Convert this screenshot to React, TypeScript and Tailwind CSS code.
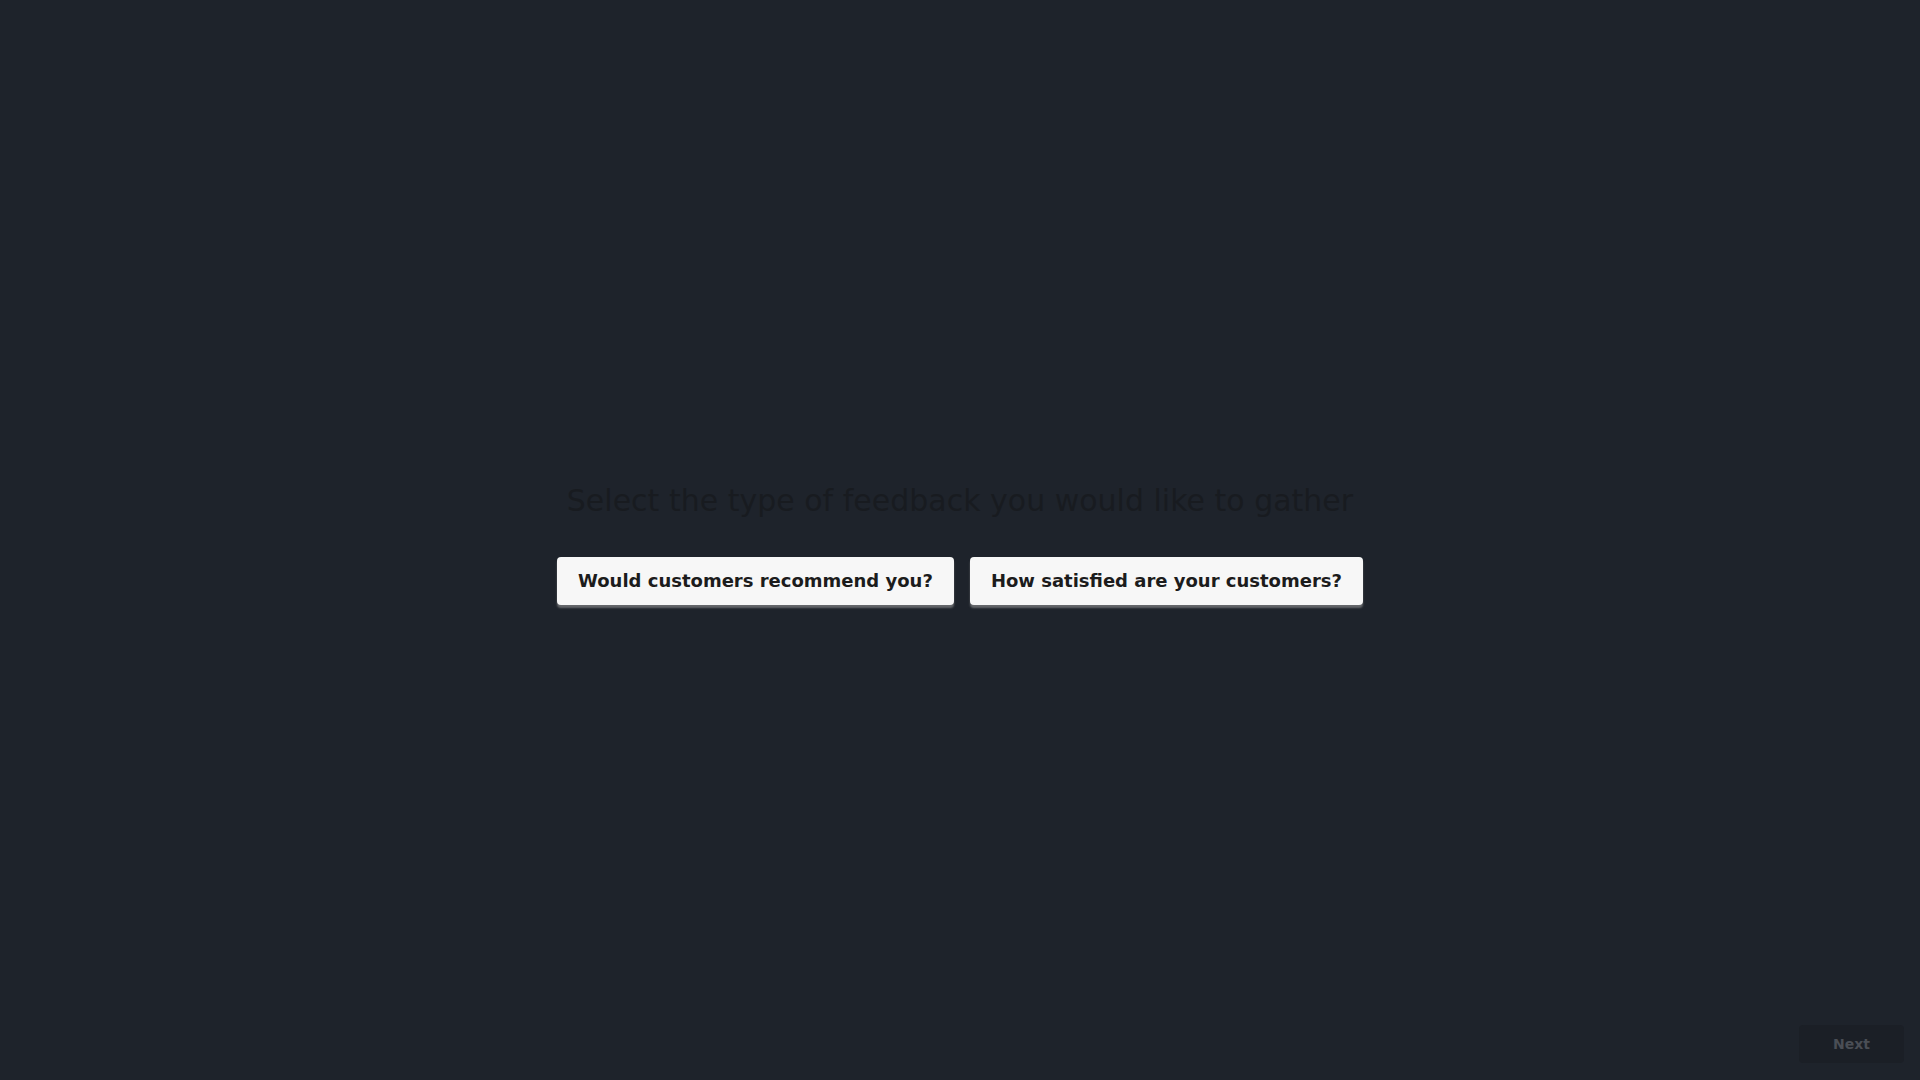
export default function App() {
  return (
    <div
      className="relative flex min-h-screen w-full flex-col items-center justify-center bg-[#1e232b]"
      style={{ fontFamily: '"DejaVu Sans", sans-serif' }}
    >
      <div className="flex flex-col items-center pt-[8px]">
        <h1 className="text-[30px] leading-[36px] font-normal text-[#181b20]">
          Select the type of feedback you would like to gather
        </h1>
        <div className="mt-[38px] flex gap-4">
          <button className="rounded-[4px] bg-[#f7f7f7] px-[21px] py-[10px] text-[18px] leading-[28px] font-bold text-[#1c1c1c] shadow-[0_3px_2px_rgba(160,160,160,0.55)]">
            Would customers recommend you?
          </button>
          <button className="rounded-[4px] bg-[#f7f7f7] px-[21px] py-[10px] text-[18px] leading-[28px] font-bold text-[#1c1c1c] shadow-[0_3px_2px_rgba(160,160,160,0.55)]">
            How satisfied are your customers?
          </button>
        </div>
      </div>
      <button className="absolute right-[16px] bottom-[17px] rounded-[4px] bg-[#1b1f26] px-[34px] py-[9px] text-[14px] leading-[20px] font-bold text-[#4a4e55]">
        Next
      </button>
    </div>
  );
}
